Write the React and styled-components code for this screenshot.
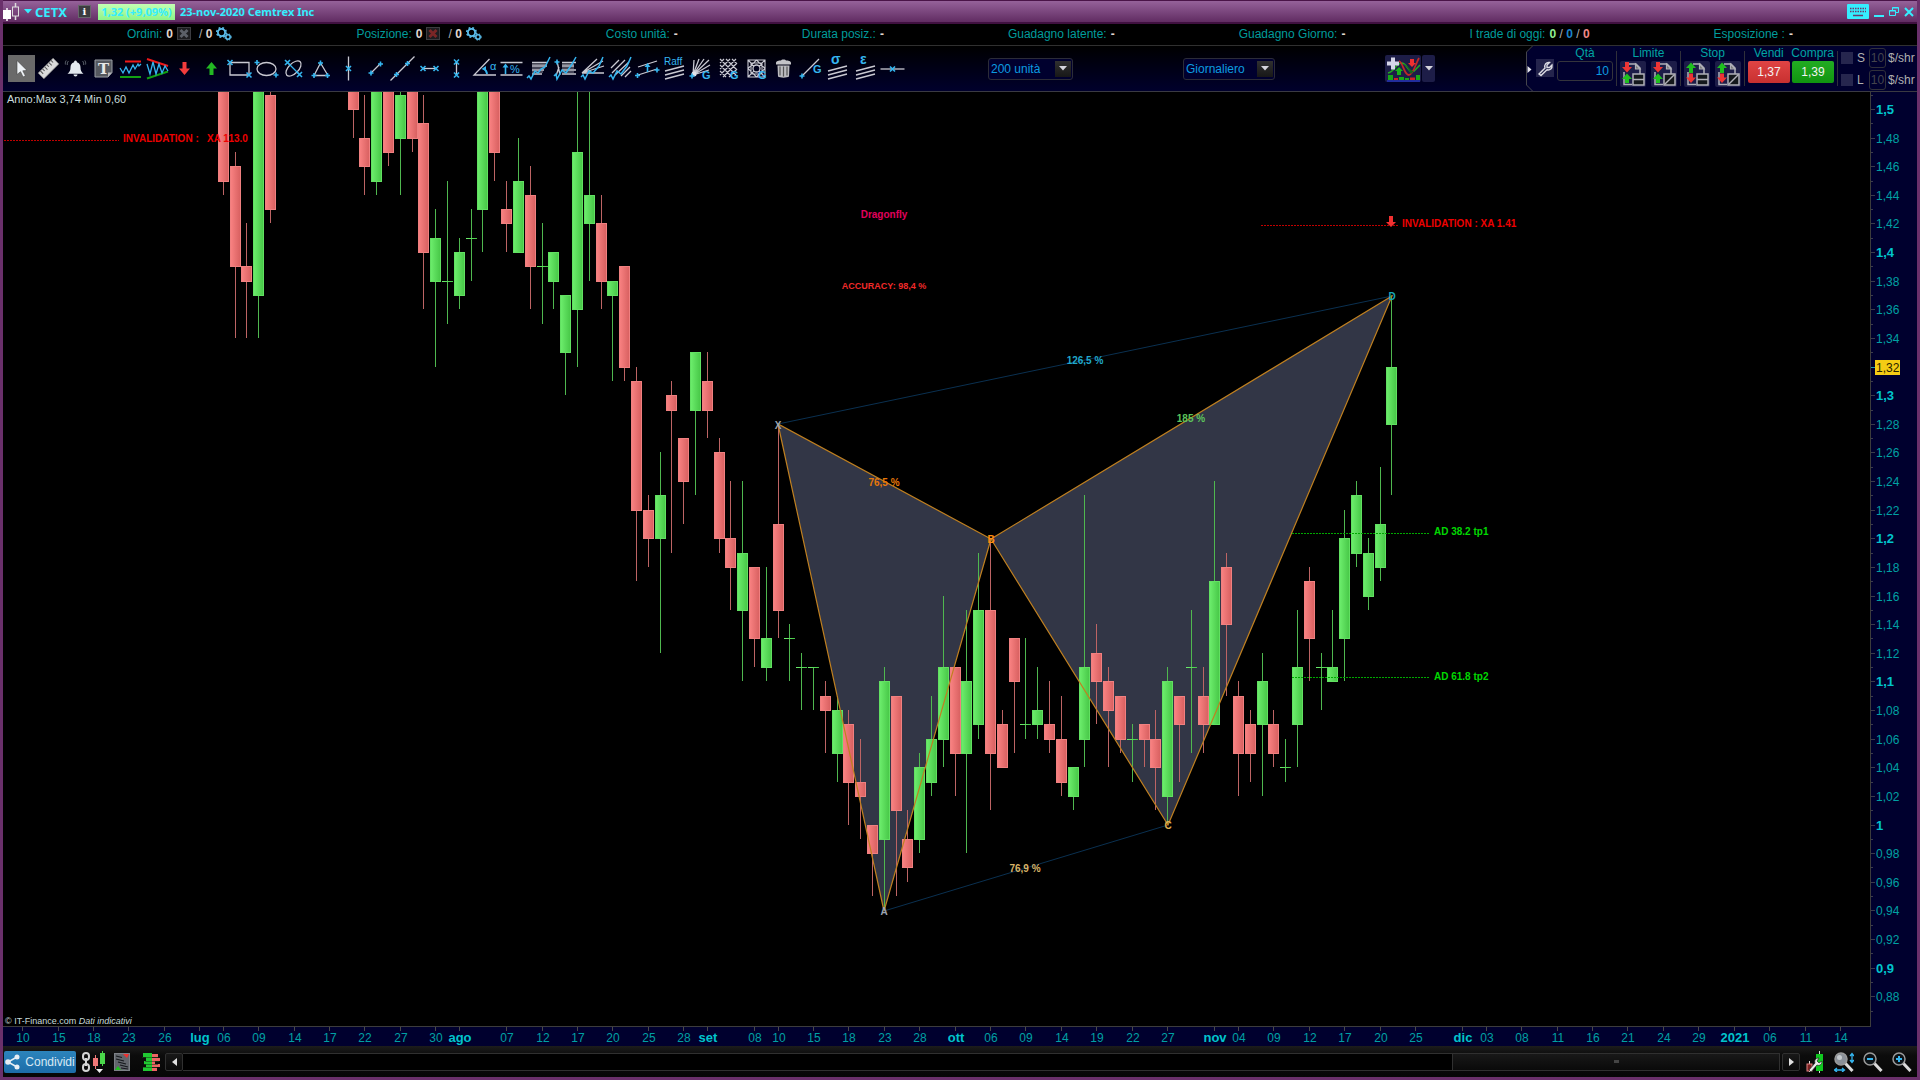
import React, { useState } from 'react';
import styled, { createGlobalStyle } from 'styled-components';

const UP = 'up';
const DOWN = 'down';

// [bar, direction, body top, body bottom, high, low] - prices in cents
const candles = [
    [0, DOWN, 160, 145, 160, 144],
    [1, DOWN, 146, 139, 147, 134],
    [2, DOWN, 139, 138, 142, 134],
    [3, UP, 160, 137, 160, 134],
    [4, DOWN, 151, 143, 160, 142],
    [11, DOWN, 160, 150, 160, 148],
    [12, DOWN, 148, 146, 151, 144],
    [13, UP, 160, 145, 160, 144],
    [14, DOWN, 160, 147, 160, 146],
    [15, UP, 151, 148, 160, 144],
    [16, DOWN, 160, 148, 160, 147],
    [17, DOWN, 149, 140, 151, 136],
    [18, UP, 141, 138, 143, 132],
    [19, UP, 138, 138, 145, 135],
    [20, UP, 140, 137, 141, 136],
    [21, UP, 141, 141, 143, 138],
    [22, UP, 160, 143, 160, 140],
    [23, DOWN, 160, 147, 160, 145],
    [24, DOWN, 143, 142, 145, 140],
    [25, UP, 145, 140, 148, 140],
    [26, DOWN, 144, 139, 146, 136],
    [27, UP, 139, 139, 142, 135],
    [28, UP, 140, 138, 140, 136],
    [29, UP, 137, 133, 137, 130],
    [30, UP, 147, 136, 160, 132],
    [31, UP, 144, 142, 160, 138],
    [32, DOWN, 142, 138, 144, 136],
    [33, UP, 138, 137, 138, 131],
    [34, DOWN, 139, 132, 139, 131],
    [35, DOWN, 131, 122, 132, 117],
    [36, DOWN, 122, 120, 123, 118],
    [37, UP, 123, 120, 126, 112],
    [38, DOWN, 130, 129, 131, 119],
    [39, DOWN, 127, 124, 127, 121],
    [40, UP, 133, 129, 133, 123],
    [41, DOWN, 131, 129, 133, 127],
    [42, DOWN, 126, 120, 127, 119],
    [43, DOWN, 120, 118, 124, 115],
    [44, UP, 119, 115, 124, 110],
    [45, DOWN, 118, 113, 118, 111],
    [46, UP, 113, 111, 118, 110],
    [47, DOWN, 121, 115, 128, 113],
    [48, UP, 113, 113, 114, 110],
    [49, UP, 111, 111, 112, 108],
    [50, UP, 111, 111, 111, 108],
    [51, DOWN, 109, 108, 110, 105],
    [52, UP, 108, 105, 109, 103],
    [53, DOWN, 107, 103, 108, 100],
    [54, DOWN, 103, 102, 106, 99],
    [55, DOWN, 100, 98, 100, 95],
    [56, UP, 110, 99, 111, 94],
    [57, DOWN, 109, 101, 109, 95],
    [58, DOWN, 99, 97, 101, 96],
    [59, UP, 104, 99, 105, 98],
    [60, UP, 106, 103, 109, 102],
    [61, UP, 111, 106, 116, 104],
    [62, DOWN, 111, 105, 111, 102],
    [63, UP, 110, 105, 115, 98],
    [64, UP, 115, 107, 119, 106],
    [65, DOWN, 115, 105, 120, 101],
    [66, DOWN, 107, 104, 108, 104],
    [67, DOWN, 113, 110, 113, 105],
    [68, UP, 107, 107, 113, 106],
    [69, UP, 108, 107, 111, 106],
    [70, DOWN, 107, 106, 110, 105],
    [71, DOWN, 106, 103, 109, 102],
    [72, UP, 104, 102, 104, 101],
    [73, UP, 111, 106, 123, 104],
    [74, DOWN, 112, 110, 114, 107],
    [75, DOWN, 110, 108, 111, 104],
    [76, DOWN, 109, 106, 109, 105],
    [77, UP, 106, 106, 107, 103],
    [78, DOWN, 107, 106, 107, 104],
    [79, DOWN, 106, 104, 108, 101],
    [80, UP, 110, 102, 111, 100],
    [81, DOWN, 109, 107, 109, 103],
    [82, UP, 111, 111, 115, 105],
    [83, DOWN, 109, 107, 111, 105],
    [84, UP, 117, 107, 124, 107],
    [85, DOWN, 118, 114, 119, 109],
    [86, DOWN, 109, 105, 110, 102],
    [87, DOWN, 107, 105, 108, 103],
    [88, UP, 110, 107, 112, 102],
    [89, DOWN, 107, 105, 108, 104],
    [90, UP, 104, 104, 106, 103],
    [91, UP, 111, 107, 115, 104],
    [92, DOWN, 117, 113, 118, 110],
    [93, UP, 111, 111, 112, 108],
    [94, UP, 111, 110, 115, 110],
    [95, UP, 120, 113, 122, 110],
    [96, UP, 123, 119, 124, 118],
    [97, UP, 119, 116, 120, 115],
    [98, UP, 121, 118, 125, 117],
    [99, UP, 132, 128, 137, 123],
];

const dates = [
    [-17, '10'], [-14, '15'], [-11, '18'], [-8, '23'], [-5, '26'], [-2, 'lug'], [0, '06'], [3, '09'],
    [6, '14'], [9, '17'], [12, '22'], [15, '27'], [18, '30'], [20, 'ago'], [24, '07'], [27, '12'],
    [30, '17'], [33, '20'], [36, '25'], [39, '28'], [41, 'set'], [45, '08'], [47, '10'], [50, '15'],
    [53, '18'], [56, '23'], [59, '28'], [62, 'ott'], [65, '06'], [68, '09'], [71, '14'], [74, '19'],
    [77, '22'], [80, '27'], [84, 'nov'], [86, '04'], [89, '09'], [92, '12'], [95, '17'], [98, '20'],
    [101, '25'], [105, 'dic'], [107, '03'], [110, '08'], [113, '11'], [116, '16'], [119, '21'],
    [122, '24'], [125, '29'], [128, '2021'], [131, '06'], [134, '11'], [137, '14'],
];

const barX = (bar) => Math.floor(220.3 + bar * 11.804);
const priceY = (cents) => Math.round(17 + (150 - cents) * 14.31);

const formatPrice = (cents) => {
    const value = cents / 100;
    return cents % 10 === 0 ? String(value).replace('.', ',') : value.toFixed(2).replace('.', ',');
};

/* ---------- icons ---------- */

const CYAN = '#35b6f0';
const LIGHT = '#c9c9d2';

const X = ({ x, y }) => (
    <path d={`M${x - 2.5} ${y - 2.5}l5 5m0-5l-5 5`} stroke={CYAN} strokeWidth="1.6" fill="none" />
);
const Plus = ({ x, y }) => (
    <path d={`M${x - 2.5} ${y}h5m-2.5-2.5v5`} stroke={CYAN} strokeWidth="1.6" fill="none" />
);
const Lines = ({ d, w = 1.3, color = LIGHT }) => <path d={d} stroke={color} strokeWidth={w} fill="none" />;
const Glyph = ({ x, y, size = 11, bold, children }) => (
    <text x={x} y={y} fontSize={size} fontWeight={bold ? 700 : 400} fill={CYAN}>{children}</text>
);

const tools = [
    ['Puntatore', <path d="M9 5.500v14l3.500-2.800 2.600 5.300 2.300-1.200-2.600-5 4.200-.4z" fill="#eef2f6" stroke="#444" strokeWidth=".6" />],
    ['Righello', <g transform="rotate(-45 13.500 13.500)">
        <rect x="3" y="9.500" width="21" height="8" fill="#dcdcdc" stroke="#8a8a8a" strokeWidth=".7" />
        <path d="M6 9.500v4M9 9.500v3M12 9.500v4M15 9.500v3M18 9.500v4M21 9.500v3" stroke="#555" strokeWidth="1" />
    </g>],
    ['Allarme', <g>
        <path d="M13.500 5.500c1 0 1.400.8 1.400 1.700 2.600.7 3.600 2.800 3.600 5.300 0 3 .8 4.500 3 6.300h-16c2.200-1.800 3-3.300 3-6.300 0-2.500 1-4.600 3.600-5.300 0-.9.400-1.700 1.400-1.700z" fill="#e3e9ee" />
        <path d="M11.500 19.500h4c0 2.600-4 2.600-4 0z" fill="#e3e9ee" />
        <path d="M6.500 6c-1 1-1.400 2.500-1.200 4M4.200 5.500c-.8 1-1 2.500-.8 4M20.500 6c1 1 1.400 2.500 1.200 4M22.800 5.500c.8 1 1 2.500.8 4" stroke="#777f88" strokeWidth=".8" fill="none" />
    </g>],
    ['Testo', <g>
        <path d="M5 5h17v12.500l-4 4.500H5z" fill="#55585e" stroke="#9a9ea5" strokeWidth="1" />
        <path d="M22 17.500h-4V22z" fill="#b5b8bd" />
        <text x="13.500" y="19" fontSize="15" fontWeight="700" textAnchor="middle" fill="#e8e8e8" fontFamily="DejaVu Serif">T</text>
    </g>],
    ['Supporti e resistenze', <g>
        <Lines d="M8 6.500h16" w="2" color="#f01818" />
        <Lines d="M3 22h21" w="2" color="#12a012" />
        <Lines d="M3 13l3 5 3-6 3 6 4-8 2 4 3-5 1 2 2-2" color={CYAN} />
    </g>],
    ['Canali', <g>
        <Lines d="M3 4l21 7" w="2" color="#f01818" />
        <Lines d="M3 23.500l21-7" w="2" color="#12a012" />
        <Lines d="M3 9l3 10 3-12 3 12 3-10 3 9 3-7 3 5" color={CYAN} />
    </g>],
    ['Freccia giù', <path d="M11.500 7h4v6.500h3.500L13.500 20 8 13.500h3.500z" fill="#f23c3c" />],
    ['Freccia su', <path d="M11.500 20h4v-6.500h3.500L13.500 7 8 13.500h3.500z" fill="#23b823" />],
    ['Rettangolo', <g><Lines d="M4 7.500h19V20H4z" /><X x={4} y={7.5} /><X x={23} y={20} /></g>],
    ['Ellisse', <g>
        <ellipse cx="13.500" cy="14" rx="9.500" ry="6.500" fill="none" stroke={LIGHT} strokeWidth="1.3" />
        <Plus x={4} y={7.5} /><Plus x={23} y={20} />
    </g>],
    ['Ellisse inclinata', <g>
        <ellipse cx="13.500" cy="13.500" rx="9.500" ry="5" transform="rotate(-45 13.500 13.500)" fill="none" stroke={LIGHT} strokeWidth="1.3" />
        <Lines d="M7.500 7.500l12 12" color={CYAN} /><X x={7.5} y={7.5} /><X x={19.5} y={19.5} />
    </g>],
    ['Triangolo', <g><Lines d="M13.500 8L7 20.500h14z" /><Plus x={13.5} y={8} /><Plus x={7} y={20.5} /><Plus x={20.5} y={20.5} /></g>],
    ['Linea verticale', <g><Lines d="M13.500 1.500v24" /><X x={13.5} y={13.5} /></g>],
    ['Segmento', <g><Lines d="M9 18l9-9" /><Plus x={9} y={18} /><Plus x={18.5} y={9} /></g>],
    ['Linea', <g><Lines d="M1.500 25.500l24-24" /><Plus x={7.5} y={19.5} /><Plus x={18.5} y={8.5} /></g>],
    ['Segmento orizzontale', <g><Lines d="M7 13.500h13" /><X x={7} y={13.5} /><X x={20} y={13.5} /></g>],
    ['Segmento verticale', <g><Lines d="M13.500 7v13" /><X x={13.5} y={7} /><X x={13.5} y={20} /></g>],
    ['Angolo', <g>
        <Lines d="M25 20H3L18.500 4" />
        <Lines d="M16 19c0-2.500-1-4-3.500-5.500" color={CYAN} w="1.800" /><path d="M10.500 14l4.500-3v5z" fill={CYAN} />
        <Glyph x={19} y={15}>α</Glyph>
    </g>],
    ['Percentuale', <g>
        <Lines d="M2.500 7.500h22M2.500 20h22" />
        <Lines d="M7.500 19v-8" color={CYAN} w="1.600" /><path d="M4.500 12.500l3-4 3 4z" fill={CYAN} />
        <Glyph x={12} y={18}>%</Glyph>
    </g>],
    ['Ritracciamenti', <g>
        <Lines d="M7 7.500h15M7 11h15M7 15h12M7 19h10" /><Lines d="M7 9.300h15M7 13h13M7 17h11" w=".7" />
        <Lines d="M2 23l2-2 2 3 4-8 3 2 3-4 4-2 5-10" color={CYAN} w="1.500" />
    </g>],
    ['Estensioni', <g>
        <Lines d="M10 7.500h14M10 11h12M10 15h14M10 19h14" /><Lines d="M10 9.300h12M10 13h12M10 17h12" w=".7" />
        <Lines d="M5 6l3 14M4 21l3-9" /><Plus x={5} y={7} />
        <Lines d="M2 21l2-2 1 5 5-9 4 3 6-9 4-7" color={CYAN} w="1.500" />
    </g>],
    ['Ventaglio', <g>
        <Lines d="M3 18L18 4M3 18l21-12M3 18l22-7M3 18h22" />
        <Lines d="M2 22l2-2 2 4 4-8 4 2 6-7 4-9" color={CYAN} w="1.500" />
    </g>],
    ['Canali paralleli', <g>
        <Lines d="M4 13L12 5M5 18L18 5M8 20L22 7M14 21l9-9M18 22l6-6" />
        <Lines d="M2 22l2-2 2 4 4-8 4 3 6-8 4-9" color={CYAN} w="1.500" />
    </g>],
    ['Canale', <g>
        <Lines d="M4 12l19-6M4 20l19-6" /><Plus x={3.5} y={20.5} /><Plus x={23} y={15} />
        <Lines d="M13.500 17v-7" color={CYAN} w="1.600" /><path d="M10.500 12l3-4 3 4z" fill={CYAN} />
    </g>],
    ['Raff', <g><Glyph x={3} y={10} size={10}>Raff</Glyph><Lines d="M4 16l19-5M4 20l19-5M4 24l19-5" /></g>],
    ['Ventaglio Gann', <g>
        <Lines d="M5 20L6 5M5 20L11 4M5 20L16 4M5 20L21 5M5 20L22 10M5 20l16-5" />
        <circle cx="6" cy="19" r="2.500" fill="#e4e4ea" /><Plus x={4} y={21} />
        <Glyph x={14} y={24} bold>G</Glyph>
    </g>],
    ['Griglia Gann', <g>
        <Lines d="M4 8l4-4M4 14L14 4M4 20L20 4M7 22L21 8M13 22l8-8M4 16l6 6M4 10l12 12M4 4l16 16M10 4l11 11M16 4l5 5" w="1.200" />
        <Glyph x={14} y={24} bold>G</Glyph>
    </g>],
    ['Quadrato Gann', <g>
        <Lines d="M5 5h17v17H5zM8 8h11v11H8zM13.500 5l8.500 8.500-8.500 8.500L5 13.500zM5 5l17 17M22 5L5 22" w="1.100" />
        <circle cx="13.500" cy="13.500" r="3.500" stroke={LIGHT} strokeWidth="1.300" fill="#00001c" />
        <Glyph x={15} y={24} bold>G</Glyph>
    </g>],
    ['Elimina', <g>
        <path d="M6 8c0-2 3-2.500 5-2.500 0-1.500 5-1.500 5 0 2 0 5 .5 5 2.500v1.500H6z" fill="#c4c4c8" />
        <path d="M7.500 10.500h12l-.5 11c-2 1.500-9 1.500-11 0z" fill="#bcbcc0" />
        <path d="M10 11.500v9M13.500 11.500v10M17 11.500v9" stroke="#555" strokeWidth="1.200" />
    </g>],
    ['Linea Gann', <g><Lines d="M5 21L22 4" /><Plus x={5} y={21} /><Glyph x={16} y={18} bold>G</Glyph></g>],
    ['Deviazione standard', <g><Glyph x={7} y={9} size={14} bold>σ</Glyph><Lines d="M4 16l19-5M4 20l19-5M4 24l19-5" /></g>],
    ['Errore standard', <g><Glyph x={8} y={9} size={14} bold>ε</Glyph><Lines d="M4 16l19-5M4 20l19-5M4 24l19-5" /></g>],
    ['Linea orizzontale', <g><Lines d="M1.500 14h24" /><X x={13.5} y={14} /></g>],
];

const CandleLogo = () => (
    <svg width="18" height="20" viewBox="0 0 18 20">
        <path d="M4 6v13" stroke="#fff" strokeWidth="1.500" />
        <rect x="0" y="8" width="8" height="9" fill="#fff" />
        <path d="M12.500 1v4M12.500 14v4" stroke="#ddd" strokeWidth="1.500" />
        <rect x="9.500" y="5" width="6" height="9" fill="none" stroke="#ddd" />
    </svg>
);

const Gears = () => (
    <svg width="16" height="14" viewBox="0 0 16 14">
        <circle cx="5.500" cy="5.500" r="3.600" fill="none" stroke="#5cc0ee" strokeWidth="1.800" />
        <circle cx="5.500" cy="5.500" r="4.800" fill="none" stroke="#5cc0ee" strokeWidth="1.500" strokeDasharray="1.900 1.900" />
        <circle cx="12" cy="10" r="2.200" fill="none" stroke="#5cc0ee" strokeWidth="1.500" />
        <circle cx="12" cy="10" r="3.200" fill="none" stroke="#5cc0ee" strokeWidth="1" strokeDasharray="1.300 1.300" />
    </svg>
);

const CloseBox = ({ color }) => (
    <svg width="14" height="13" viewBox="0 0 14 13">
        <rect x=".5" y=".5" width="13" height="12" fill="#1d1d20" stroke="#3c3c40" />
        <path d="M3.500 3l7 7m0-7l-7 7" stroke={color} strokeWidth="3" />
    </svg>
);

const Caret = ({ color = '#d5d5dc', width = 8 }) => (
    <svg width={width} height="5" viewBox="0 0 8 5"><path d="M0 0h8L4 4.500z" fill={color} /></svg>
);

const IndicatorIcon = () => (
    <svg width="36" height="27" viewBox="0 0 36 27">
        <path d="M3 18c6-1 8-10 14-10 6 1 6 11 12 8l6-6" stroke="#23a823" strokeWidth="1.600" fill="none" />
        <path d="M14 6c4 1 5 14 10 14 4 0 7-12 10-17" stroke="#c02828" strokeWidth="1.800" fill="none" />
        <path d="M18 9c5 2 6 8 8 10l3-3c-4 0-7-7-11-7z" fill="#14661c" />
        <path d="M6 2.500h4v4h4v4h-4v4H6v-4H2v-4h4z" fill="#d5d5e8" />
        <path d="M25 4h4v4h2l-4 4-4-4h2z" fill="#ee3030" />
        <path d="M12 20h4v-4h2l-4-4-4 4h2z" fill="#19b019" />
        <path d="M3 20h5v5H3zM14 22h5v3h-5zM20 23h4v2h-4zM31 20h4v5h-4z" fill="#17a817" />
        <path d="M9 23h4v2H9zM25 22.500h5V25h-5z" fill="#cc2626" />
        <path d="M2 26h33" stroke="#2533b8" strokeWidth="1.400" />
    </svg>
);

const Wrench = () => (
    <svg width="18" height="18" viewBox="0 0 18 18">
        <path d="M3 15l6-6c-1-3 1-6 4.500-5.500L11 6v2.500h2.500L16 6c.5 3.500-2 5.500-5 4.800L5 16.500z" fill="none" stroke="#dcdce4" strokeWidth="1.400" />
    </svg>
);

// order template icon: two coloured arrows over a page, split or diagonal cell
const OrderIcon = ({ top, bottom, slash }) => (
    <svg width="26" height="26" viewBox="0 0 26 26">
        <path d="M9 3h7l4 4v6M4 11v12.500h8" stroke="#b0b0b8" strokeWidth="1.500" fill="none" />
        <path d="M15.500 3v5H20z" stroke="#b0b0b8" strokeWidth="1.200" fill="#777" />
        <path d={top === 'up' ? 'M5 12V7H2L7 1.500 12 7H9v5z' : 'M5 1h4v5h3l-5 5.500L2 6h3z'} fill={top === 'up' ? '#1fc01f' : '#ee3535'} />
        <path d={bottom === 'up' ? 'M5 22v-4H2l5-5.500 5 5.500H9v4z' : 'M5 12.500h4v4h3L7 22l-5-5.500h3z'} fill={bottom === 'up' ? '#1fc01f' : '#ee3535'} />
        <rect x="13" y="13" width="11" height="11" fill="#14181c" stroke="#b0b0b8" strokeWidth="1.500" />
        <path d={slash ? 'M13.500 23.500l10-10' : 'M13 18.500h11'} stroke="#b0b0b8" strokeWidth="1.500" />
    </svg>
);

const Magnifier = ({ sign, filled }) => (
    <svg width="20" height="20" viewBox="0 0 20 20">
        <path d="M11 11l7.500 8" stroke="#dadada" strokeWidth="3" />
        <circle cx="7" cy="7" r="6" fill={filled ? '#8a9098' : '#0c1216'} stroke="#9a9a9a" strokeWidth="1.500" />
        {filled && <circle cx="5.500" cy="5.500" r="2.500" fill="#c4cace" />}
        {sign && <path d={sign === '+' ? 'M4 7h6M7 4v6' : 'M4 7h6'} stroke={CYAN} strokeWidth="2" />}
        {filled && <path d="M18 2v8M16 4l2-2.500L20 4M16 8l2 2.500L20 8M1 18h9M3 16l-2.500 2L3 20M8 16l2.500 2L8 20" stroke={CYAN} strokeWidth="1.300" fill="none" />}
    </svg>
);

/* ---------- chart ---------- */

function Plot() {
    const points = {
        X: [775, 332],
        A: [881, 819],
        B: [988, 447],
        C: [1165, 733],
        D: [1389, 204],
    };
    const path = (keys) => keys.map((k) => points[k].join(',')).join(' ');

    return (
        <SCPlot role="img" aria-label="Grafico CETX giornaliero">
            <defs>
                <linearGradient id="up">
                    <stop offset="0" stopColor="#6ff06f" />
                    <stop offset="1" stopColor="#45c545" />
                </linearGradient>
                <linearGradient id="down">
                    <stop offset="0" stopColor="#fb8484" />
                    <stop offset="1" stopColor="#d65e5e" />
                </linearGradient>
            </defs>
            <polygon points={path(['X', 'A', 'B'])} fill="#323646" />
            <polygon points={path(['B', 'C', 'D'])} fill="#323646" />
            <g shapeRendering="crispEdges">
                {candles.map(([bar, dir, top, bottom, high, low]) => (
                    <g key={bar}>
                        <rect x={barX(bar)} y={priceY(high)} width="1" height={priceY(low) - priceY(high)} fill={dir === UP ? '#4fb84f' : '#bd6464'} />
                        <rect x={barX(bar) - 5} y={priceY(top)} width="11" height={Math.max(1, priceY(bottom) - priceY(top) + 1)} fill={`url(#${dir})`} />
                        {top !== bottom && (
                            <rect x={barX(bar) - 4.5} y={priceY(top) + 0.5} width="10" height={priceY(bottom) - priceY(top)} fill="none" stroke={dir === UP ? '#62e062' : '#f08080'} />
                        )}
                    </g>
                ))}
            </g>
            <g stroke="#0a3050" fill="none">
                <polyline points={path(['X', 'D'])} />
                <polyline points={path(['A', 'C'])} />
            </g>
            <g stroke="#c08020" strokeWidth="1.200" fill="none">
                <polygon points={path(['X', 'A', 'B'])} />
                <polygon points={path(['B', 'C', 'D'])} />
            </g>
            <g strokeDasharray="2 1">
                <path d="M1 48.500H116M1258 133.500H1395" stroke="#c00000" />
                <path d="M1289 441.500H1427M1289 585.500H1427" stroke="#00a800" />
            </g>
            <path d="M1386 124h4v6h3l-5 5-5-5h3z" fill="#f23030" />

            <SCNote x="120" y="50" $color="#ee0000">INVALIDATION :   XA 113.0</SCNote>
            <SCNote x="1399" y="135" $color="#ee0000">INVALIDATION : XA 1.41</SCNote>
            <SCNote x="1431" y="443" $color="#00d800">AD 38.2 tp1</SCNote>
            <SCNote x="1431" y="588" $color="#00d800">AD 61.8 tp2</SCNote>
            <SCNote x="881" y="126" $center $color="#e0005c">Dragonfly</SCNote>
            <SCNote x="881" y="197" $center $small $color="#f02a2a">ACCURACY: 98,4 %</SCNote>
            <SCNote x="1082" y="272" $center $color="#20a8cc">126,5 %</SCNote>
            <SCNote x="1188" y="330" $center $color="#5cc45c">185 %</SCNote>
            <SCNote x="881" y="394" $center $color="#e87808">76,5 %</SCNote>
            <SCNote x="1022" y="780" $center $color="#d8b468">76,9 %</SCNote>
            <SCNote x="775" y="337" $center $color="#9aa4b0">X</SCNote>
            <SCNote x="881" y="823" $center $color="#9aa4b0">A</SCNote>
            <SCNote x="988" y="451" $center $color="#ff8c10">B</SCNote>
            <SCNote x="1165" y="737" $center $color="#e0b050">C</SCNote>
            <SCNote x="1389" y="208" $center $color="#18a8b8">D</SCNote>
            <SCRange x="4" y="11">Anno:Max 3,74 Min 0,60</SCRange>
        </SCPlot>
    );
}

function PriceAxis() {
    const labels = [];
    for (let c = 150; c >= 88; c -= 2) labels.push(c);
    const ticks = [];
    for (let c = 151; c >= 87; c -= 1) ticks.push(c);

    return (
        <SCPriceAxis>
            {ticks.map((c) => (
                <path key={c} d={`M0 ${priceY(c) + 0.5}h${c % 2 === 0 ? 4 : 2}`} stroke={c === 132 ? '#20a0b0' : '#3c3c4c'} />
            ))}
            <rect x="4" y="268" width="25" height="15" fill="#f5cc14" />
            {labels.map((c) => (
                <SCAxisText key={c} x="5" y={priceY(c) + 5} $strong={c % 10 === 0} $dark={c === 132}>{formatPrice(c)}</SCAxisText>
            ))}
        </SCPriceAxis>
    );
}

function TimeAxis() {
    return (
        <SCTimeAxis>
            {dates.map(([bar, label]) => {
                const month = !/^\d\d$/.test(label);
                return (
                    <g key={bar}>
                        <path d={`M${barX(bar) + 0.5} 0v4`} stroke="#4a4a4a" />
                        <SCAxisText x={barX(bar) + 1} y="15" $center $strong={month}>{label}</SCAxisText>
                    </g>
                );
            })}
        </SCTimeAxis>
    );
}

/* ---------- page ---------- */

function TradePanel() {
    const [qty, setQty] = useState('10');

    return (
        <SCTrade>
            <svg width="8" height="45" viewBox="0 0 8 45">
                <path d="M8 0L1.500 6v33L8 45z" fill="#00002e" />
                <path d="M7.500 0L1.500 6v33l6 6" fill="none" stroke="#45454c" />
                <path d="M2.500 20l4 3.500-4 3.500z" fill="#e6e6ee" />
            </svg>
            <SCWrench aria-label="Opzioni"><Wrench /></SCWrench>
            <SCGroup $width="56px">
                <SCCaption as="label" htmlFor="qty">Qtà</SCCaption>
                <SCQty id="qty" value={qty} onChange={(e) => setQty(e.target.value)} />
            </SCGroup>
            <SCDivider />
            <SCGroup $width="57px">
                <SCCaption>Limite</SCCaption>
                <SCPair>
                    <SCOrder aria-label="Limite doppio"><OrderIcon top="down" bottom="up" /></SCOrder>
                    <SCOrder aria-label="Limite inclinato"><OrderIcon top="down" bottom="up" slash /></SCOrder>
                </SCPair>
            </SCGroup>
            <SCDivider />
            <SCGroup $width="57px">
                <SCCaption>Stop</SCCaption>
                <SCPair>
                    <SCOrder aria-label="Stop doppio"><OrderIcon top="up" bottom="down" /></SCOrder>
                    <SCOrder aria-label="Stop inclinato"><OrderIcon top="up" bottom="down" slash /></SCOrder>
                </SCPair>
            </SCGroup>
            <SCDivider />
            <SCGroup $width="86px">
                <SCPair>
                    <SCCaption>Vendi</SCCaption>
                    <SCCaption>Compra</SCCaption>
                </SCPair>
                <SCPair>
                    <SCPrice $sell>1,37</SCPrice>
                    <SCPrice>1,39</SCPrice>
                </SCPair>
            </SCGroup>
            <SCDivider />
            <SCLimits>
                {['S', 'L'].map((k) => (
                    <SCLimit key={k}>
                        <input type="checkbox" id={`chk${k}`} />
                        <label htmlFor={`chk${k}`}>{k}</label>
                        <input type="text" defaultValue="10" aria-label={`${k} $/shr`} />
                        <span>$/shr</span>
                    </SCLimit>
                ))}
            </SCLimits>
        </SCTrade>
    );
}

function App() {
    const [tool, setTool] = useState(0);

    return (
        <>
        <GlobalStyle />
        <SCFrame>
            <SCTitleBar>
                <CandleLogo />
                <Caret color="#35eeff" />
                <SCTicker>CETX</SCTicker>
                <SCInfo aria-label="Info">i</SCInfo>
                <SCQuote>1,32 (+9,09%)</SCQuote>
                <span>23-nov-2020 Cemtrex Inc</span>
                <SCWindowButtons>
                    <button aria-label="Tastiera">
                        <svg width="22" height="15" viewBox="0 0 22 15">
                            <rect width="22" height="15" rx="1" fill="#35eeff" />
                            <path d="M3 4.500h16M3 7.500h16" stroke="#6a3a6c" strokeWidth="1.500" strokeDasharray="1.500 1" />
                            <path d="M6 11.500h10" stroke="#6a3a6c" strokeWidth="1.500" />
                        </svg>
                    </button>
                    <button aria-label="Riduci"><svg width="10" height="12"><path d="M0 10h10" stroke="#35eeff" strokeWidth="2" /></svg></button>
                    <button aria-label="Ripristina">
                        <svg width="10" height="12" viewBox="0 0 10 12"><path d="M3.500 4V1.500h6v5H7M.5 4.500h6v5h-6zM3.500 2h6M.5 5h6" fill="none" stroke="#35eeff" /></svg>
                    </button>
                    <button aria-label="Chiudi"><svg width="10" height="12" viewBox="0 0 10 12"><path d="M1 2l8 8m0-8l-8 8" stroke="#35eeff" strokeWidth="2" /></svg></button>
                </SCWindowButtons>
            </SCTitleBar>

            <SCInfoBar>
                <SCInfoItem>Ordini: <b>0</b> <CloseBox color="#5c6068" /> <em>/ <b>0</b></em><Gears /></SCInfoItem>
                <SCInfoItem>Posizione: <b>0</b> <CloseBox color="#7a2626" /> <em>/ <b>0</b></em><Gears /></SCInfoItem>
                <SCInfoItem>Costo unità: <b>-</b></SCInfoItem>
                <SCInfoItem>Durata posiz.: <b>-</b></SCInfoItem>
                <SCInfoItem>Guadagno latente: <b>-</b></SCInfoItem>
                <SCInfoItem>Guadagno Giorno: <b>-</b></SCInfoItem>
                <SCInfoItem>I trade di oggi: <span><SCCount $color="#90ee90">0</SCCount> / <SCCount $color="#1c84cc">0</SCCount> / <SCCount $color="#f08888">0</SCCount></span></SCInfoItem>
                <SCInfoItem>Esposizione : <b>-</b></SCInfoItem>
            </SCInfoBar>

            <SCToolbar>
                <SCTools>
                    {tools.map(([name, icon], i) => (
                        <SCTool key={name} aria-label={name} $active={tool === i} onClick={() => setTool(i)}>
                            <svg width="27" height="27" viewBox="0 0 27 27">{icon}</svg>
                        </SCTool>
                    ))}
                </SCTools>
                <SCFields>
                    <SCSelectBox $width="85px">
                        <select aria-label="Unità"><option>200 unità</option></select>
                        <i><Caret /></i>
                    </SCSelectBox>
                    <SCSelectBox $width="92px">
                        <select aria-label="Periodo"><option>Giornaliero</option></select>
                        <i><Caret /></i>
                    </SCSelectBox>
                    <SCIndicators>
                        <button aria-label="Indicatori"><IndicatorIcon /></button>
                        <button aria-label="Altri indicatori"><Caret /></button>
                    </SCIndicators>
                </SCFields>
                <TradePanel />
            </SCToolbar>

            <SCChart>
                <SCPlotBox>
                    <Plot />
                    <SCCredit>© IT-Finance.com <i>Dati indicativi</i></SCCredit>
                </SCPlotBox>
                <PriceAxis />
                <TimeAxis />
            </SCChart>

            <SCBottomBar>
                <SCShare>
                    <svg width="15" height="16" viewBox="0 0 15 16">
                        <path d="M12 3L3 8l9 5" stroke="#e8eef4" strokeWidth="1.500" fill="none" />
                        <circle cx="12" cy="3" r="2.500" fill="#e8eef4" /><circle cx="3" cy="8" r="2.800" fill="#e8eef4" /><circle cx="12" cy="13" r="2.500" fill="#e8eef4" />
                    </svg>
                    Condividi
                </SCShare>
                <SCIconButton aria-label="Collega" $width="26px">
                    <svg width="26" height="22" viewBox="0 0 26 22">
                        <g fill="none" stroke="#d4d4d4" strokeWidth="2">
                            <rect x="3" y="2" width="6" height="7" rx="3" /><rect x="3" y="13" width="6" height="7" rx="3" /><path d="M6 7v8" />
                        </g>
                        <path d="M15.500 4v14" stroke="#f07878" /><rect x="13" y="7" width="5" height="8" fill="#f07878" />
                        <path d="M22.500 0v15" stroke="#4ad84a" /><rect x="20" y="2" width="5" height="11" fill="#4ad84a" />
                        <path d="M16 18h7l-3.500 4z" fill="#eee" />
                    </svg>
                </SCIconButton>
                <SCIconButton aria-label="Note" $width="32px">
                    <svg width="16" height="18" viewBox="0 0 16 18">
                        <rect x=".5" y=".5" width="15" height="17" fill="#62666c" stroke="#7c8086" />
                        <path d="M2 3l6 1.500M2 6l8 2M4 9l8 2M6 12l8 2M7 15l7 1" stroke="#15181c" strokeWidth="1.200" />
                        <path d="M9 1h6l-2 4z" fill="#ee3030" /><path d="M1 17h6l-3-4z" fill="#20c020" />
                    </svg>
                </SCIconButton>
                <SCIconButton aria-label="Profondità" $width="27px">
                    <svg width="19" height="18" viewBox="0 0 19 18">
                        <path d="M1 0h9v4H1zM4 4h6v4H4zM2 8h8v3H2zM4 11h6v3H4zM1 14h9v4H1z" fill="#20c832" />
                        <path d="M10 1h6v3h-6zM10 5h8v3h-8zM10 8h3v3h-3zM10 11h8v3h-8zM10 15h5v3h-5z" fill="#f06464" />
                        <path d="M0 4.500h16M3 8.500h14M2 11.500h14M1 14.500h14" stroke="#184818" strokeWidth=".6" />
                    </svg>
                </SCIconButton>
                <SCArrow aria-label="Indietro"><svg width="5" height="8"><path d="M5 0v8L0 4z" fill="#e0e0e0" /></svg></SCArrow>
                <SCScroll type="range" min="0" max="100" defaultValue="100" aria-label="Scorri grafico" />
                <SCArrow aria-label="Avanti"><svg width="5" height="8"><path d="M0 0v8l5-4z" fill="#e0e0e0" /></svg></SCArrow>
                <SCZooms>
                    <SCIconButton aria-label="Impostazioni" $width="20px">
                        <svg width="18" height="22" viewBox="0 0 18 22">
                            <path d="M3.500 10v11" stroke="#ddd" /><rect x="1" y="13" width="5" height="7" fill="#7a2020" stroke="#e08080" />
                            <path d="M13.500 0v22" stroke="#ddd" /><rect x="10" y="3" width="7" height="17" fill="#10c820" />
                            <path d="M3 19l6-7c-1-3 1-5 4-5l-2 3 2 2 3-2c0 4-3 5-5 4l-6 7z" fill="#ececec" stroke="#222" strokeWidth=".7" />
                        </svg>
                    </SCIconButton>
                    <SCIconButton aria-label="Adatta" $width="20px"><Magnifier filled /></SCIconButton>
                    <SCIconButton aria-label="Riduci zoom" $width="20px"><Magnifier sign="-" /></SCIconButton>
                    <SCIconButton aria-label="Aumenta zoom" $width="20px"><Magnifier sign="+" /></SCIconButton>
                </SCZooms>
            </SCBottomBar>
        </SCFrame>
        </>
    );
}

const GlobalStyle = createGlobalStyle`
    * {
        box-sizing: border-box;
    }
    body {
        margin: 0;
        background-color: #000;
        font-family: 'Liberation Sans', Arial, sans-serif;
        font-size: 12px;
    }
    button, input, select {
        font-family: inherit;
        font-size: inherit;
        padding: 0;
        margin: 0;
        border: none;
        background: none;
    }
    svg {
        display: block;
        flex-shrink: 0;
    }
`;

const SCFrame = styled.div`
    height: 100vh;
    display: flex;
    flex-direction: column;
    border: solid #6a306b;
    border-width: 0 3px 3px;
`;

const SCTitleBar = styled.header`
    height: 24px;
    flex-shrink: 0;
    display: flex;
    align-items: center;
    gap: 3px;
    color: #35eeff;
    font-family: 'Noto Sans', sans-serif;
    font-size: 11px;
    font-weight: 700;
    background: linear-gradient(#95629a, #612c62);
    border-top: 1px solid #4a1448;
    border-bottom: 2px solid #401040;
`;

const SCTicker = styled.span`
    font-size: 13px;
    width: 40px;
`;

const SCInfo = styled.button`
    width: 13px;
    height: 13px;
    margin-right: 4px;
    background-color: #3c3c40;
    border: 1px solid #66666a;
    color: #fff;
    font-family: 'DejaVu Serif', serif;
    font-size: 10px;
    font-weight: 700;
    line-height: 10px;
`;

const SCQuote = styled.span`
    width: 77px;
    height: 16px;
    line-height: 16px;
    margin-right: 2px;
    text-align: center;
    background: linear-gradient(#c4ffb4, #8cf488);
`;

const SCWindowButtons = styled.div`
    margin-left: auto;
    margin-right: 3px;
    display: flex;
    align-items: center;
    gap: 5px;
`;

const SCInfoBar = styled.div`
    height: 22px;
    flex-shrink: 0;
    display: flex;
    justify-content: space-evenly;
    align-items: center;
    padding-bottom: 2px;
    border-bottom: 1px solid #303030;
`;

const SCInfoItem = styled.div`
    display: flex;
    align-items: center;
    gap: 4px;
    white-space: nowrap;
    color: #009c9c;
    b {
        color: #e0d8d0;
    }
    em {
        font-style: normal;
        color: #b0b0b0;
        margin-left: 4px;
    }
    span {
        color: #b0b0b0;
    }
`;

const SCCount = styled.b`
    && {
        color: ${(props) => props.$color};
    }
`;

const SCToolbar = styled.div`
    height: 46px;
    flex-shrink: 0;
    display: flex;
    align-items: center;
    background: linear-gradient(#000, #00002c);
    border-bottom: 1px solid #3a3a42;
`;

const SCTools = styled.div`
    width: 898px;
    margin-left: 5px;
    display: grid;
    grid-template-columns: repeat(33, 1fr);
`;

const SCTool = styled.button`
    width: 27px;
    height: 27px;
    background-color: ${(props) => (props.$active ? '#6a6a6a' : 'transparent')};
    svg {
        overflow: visible;
    }
`;

const SCFields = styled.div`
    flex: 1;
    display: flex;
    align-items: center;
    gap: 110px;
    padding-left: 82px;
`;

const SCSelectBox = styled.div`
    position: relative;
    width: ${(props) => props.$width};
    select {
        appearance: none;
        width: 100%;
        height: 22px;
        padding-left: 2px;
        color: #0c9ce0;
        background-color: #00002e;
        border: 1px solid #2c2c38;
        border-radius: 3px;
    }
    i {
        position: absolute;
        top: 3px;
        right: 2px;
        width: 16px;
        height: 16px;
        display: flex;
        align-items: center;
        justify-content: center;
        background: linear-gradient(#303030, #181818);
        pointer-events: none;
    }
`;

const SCIndicators = styled.div`
    display: flex;
    gap: 1px;
    button {
        height: 27px;
        min-width: 13px;
        display: flex;
        align-items: center;
        justify-content: center;
        background-color: #1d1d48;
        border-radius: 2px;
    }
`;

const SCTrade = styled.div`
    height: 45px;
    width: 392px;
    display: flex;
    gap: 3px;
    color: #00a4a4;
    background: linear-gradient(90deg, transparent 8px, #00002e 8px);
`;

const SCWrench = styled.button`
    width: 18px;
    height: 18px;
    margin-top: 13px;
    background-color: #24244c;
`;

const SCGroup = styled.div`
    width: ${(props) => props.$width};
    display: flex;
    flex-direction: column;
`;

const SCCaption = styled.span`
    flex: 1;
    line-height: 14px;
    max-height: 15px;
    min-height: 15px;
    text-align: center;
`;

const SCQty = styled.input`
    width: 100%;
    height: 20px;
    padding-right: 3px;
    text-align: right;
    color: #0c9ce0;
    border: 1px solid #34343c;
    border-radius: 3px;
`;

const SCDivider = styled.div`
    width: 1px;
    height: 35px;
    margin-top: 5px;
    background-color: #30303a;
`;

const SCPair = styled.div`
    display: flex;
    justify-content: space-between;
    gap: 2px;
`;

const SCOrder = styled.button`
    width: 26px;
    height: 26px;
    background-color: #1d1d48;
    border-radius: 2px;
`;

const SCPrice = styled.button`
    flex: 1;
    height: 22px;
    color: #f4f4f4;
    border-radius: 2px;
    background: ${(props) => (props.$sell ? 'linear-gradient(#e04444, #c83030)' : 'linear-gradient(#22ac22, #109410)')};
`;

const SCLimits = styled.div`
    display: flex;
    flex-direction: column;
    gap: 2px;
    padding-top: 2px;
`;

const SCLimit = styled.div`
    height: 20px;
    display: flex;
    align-items: center;
    gap: 4px;
    color: #b0b0b0;
    input[type='checkbox'] {
        appearance: none;
        width: 12px;
        height: 12px;
        background-color: #26264e;
    }
    input[type='text'] {
        width: 17px;
        height: 20px;
        text-align: center;
        color: #44444c;
        border: 1px solid #30303a;
        border-radius: 3px;
    }
    label {
        width: 8px;
    }
    span {
        margin-left: -2px;
    }
`;

const SCChart = styled.main`
    flex: 1;
    min-height: 0;
    display: grid;
    grid-template-columns: 1fr 46px;
    grid-template-rows: 1fr 19px;
    background-color: #00002e;
`;

const SCPlotBox = styled.div`
    position: relative;
    min-width: 0;
    overflow: hidden;
    background-color: #000;
    border: solid #3c3c3c;
    border-width: 0 1px 1px 0;
`;

const SCPlot = styled.svg`
    position: absolute;
    width: 100%;
    height: 100%;
`;

const SCNote = styled.text`
    font-size: ${(props) => (props.$small ? '9px' : '10px')};
    font-weight: 700;
    white-space: pre;
    fill: ${(props) => props.$color};
    text-anchor: ${(props) => (props.$center ? 'middle' : 'start')};
`;

const SCRange = styled.text`
    font-size: 11px;
    fill: #c8dcdc;
`;

const SCCredit = styled.div`
    position: absolute;
    left: 2px;
    bottom: 0;
    font-size: 9px;
    line-height: 9px;
    color: #c8dcdc;
`;

const SCPriceAxis = styled.svg`
    width: 100%;
    height: 100%;
`;

const SCTimeAxis = styled.svg`
    grid-column: 1 / 3;
    width: 100%;
    height: 100%;
`;

const SCAxisText = styled.text`
    font-size: ${(props) => (props.$strong ? '13px' : '12px')};
    font-weight: ${(props) => (props.$strong ? 700 : 400)};
    fill: ${(props) => (props.$dark ? '#2a2400' : props.$strong ? '#00c4cc' : '#00a0a4')};
    text-anchor: ${(props) => (props.$center ? 'middle' : 'start')};
`;

const SCBottomBar = styled.footer`
    height: 31px;
    flex-shrink: 0;
    display: flex;
    align-items: center;
    padding: 0 5px 0 1px;
    background: linear-gradient(#1c1c1c, #0c0c0c 30%, #060606);
`;

const SCShare = styled.button`
    width: 72px;
    height: 22px;
    display: flex;
    align-items: center;
    justify-content: center;
    gap: 5px;
    color: #d8e8f4;
    background: linear-gradient(#2c84bc, #1c6ca8);
    border-radius: 2px;
    margin-right: 4px;
`;

const SCIconButton = styled.button`
    width: ${(props) => props.$width};
    height: 22px;
    display: flex;
    align-items: center;
    justify-content: center;
`;

const SCArrow = styled.button`
    width: 18px;
    height: 18px;
    display: flex;
    align-items: center;
    justify-content: center;
    background: linear-gradient(#181818, #0a0a0a);
    border: 1px solid #303030;
    border-radius: 2px;
`;

const SCScroll = styled.input`
    appearance: none;
    flex: 1;
    min-width: 0;
    height: 18px;
    margin-right: 2px;
    background-color: #000;
    border: solid #303030;
    border-width: 1px 0;
    &::-webkit-slider-thumb {
        appearance: none;
        width: 328px;
        height: 16px;
        background: linear-gradient(#444, #444) center / 5px 3px no-repeat, linear-gradient(#181818, #0a0a0a);
        border: solid #303030;
        border-width: 0 1px;
    }
`;

const SCZooms = styled.div`
    display: flex;
    gap: 9px;
    margin-left: 5px;
`;

export default App;
